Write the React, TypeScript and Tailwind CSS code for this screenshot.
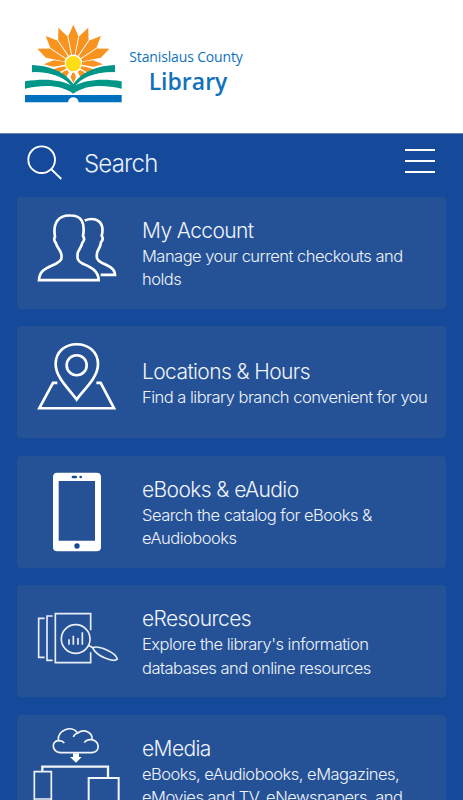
import type { ReactNode } from "react";

const upperPetals = [-67.5, -45, -22.5, 0, 22.5, 45, 67.5];

function Logo() {
  return (
    <svg viewBox="0 0 390 300" className="h-[100px] w-[130px] shrink-0" aria-hidden>
      <g fill="#f7931e">
        {upperPetals.map((angle) => (
          <path
            key={angle}
            d="M186 119 L175 63 L190 29 L205 63 L194 119 Z"
            transform={`rotate(${angle} 190 146)`}
          />
        ))}
        <path d="M166 141 V149 L129 155 L101 148 L131 136 Z M214 141 V149 L251 155 L279 148 L249 136 Z" />
        <path d="M167 153 L171 160 L149 172 L126 164 L143 158 Z M213 153 L209 160 L231 172 L254 164 L237 158 Z" />
        <path d="M170 165 L177 171 L169 187 L152 178 L158 171 Z M210 165 L203 171 L211 187 L228 178 L222 171 Z" />
        <path d="M187 173 H193 L198 187 L190 204 L182 187 Z" />
      </g>
      <circle cx="190" cy="146" r="26" fill="#fff" />
      <circle cx="190" cy="146" r="23" fill="#ffde17" />
      <g fill="#009688">
        <path d="M45 199 C105 190 153 194 190 214 C227 194 275 190 335 199 V221 C280 208 226 209 190 236 C154 209 100 208 45 221 Z" />
        <path d="M66 150 C112 151 163 168 190 207 C217 168 268 151 315 150 V172 C267 170 222 183 190 217 C158 183 113 170 66 172 Z" />
      </g>
      <path
        d="M66 172 C113 170 154 182 178 206 C158 194 125 189 100 191 M315 172 C267 170 226 182 202 206 C222 194 255 189 280 191"
        fill="#fff"
      />
      <path d="M45 240 H335 V262 H206 C204 242 176 242 174 262 H45 Z" fill="#0071bc" />
    </svg>
  );
}

function Icon({ viewBox, children }: { viewBox: string; children: ReactNode }) {
  return (
    <svg
      viewBox={viewBox}
      className="h-28 w-[125px] shrink-0"
      fill="none"
      stroke="#fff"
      strokeWidth="8"
      aria-hidden
    >
      {children}
    </svg>
  );
}

function AccountIcon() {
  return (
    <Icon viewBox="-9 -10.5 375 336">
      <path d="M57 239 H236 C235 208 211 200 187 189 C170 181 172 170 173 158 C176 147 184 141 187 127 C194 119 194 113 189 107 C196 65 184 45 152 45 C115 43 98 67 105 109 C101 115 103 122 108 128 C111 143 122 148 124 161 C126 176 124 181 109 189 C82 202 58 208 57 239 Z" />
      <path d="M194 60 C226 48 256 62 245 106 C250 113 248 120 243 125 C242 142 232 148 231 158 C229 171 230 179 244 186 C266 197 284 202 285 223 H242" />
    </Icon>
  );
}

function LocationIcon() {
  return (
    <Icon viewBox="-9 -11.7 375 336">
      <path d="M170 209 C153 183 107 145 107 103 C107 66 135 43 170 43 C205 43 234 66 234 103 C234 145 187 183 170 209 Z" />
      <circle cx="170" cy="106" r="30" />
      <path d="M112 159 H99 L58 235 H282 L242 159 H229" />
    </Icon>
  );
}

function PhoneIcon() {
  return (
    <Icon viewBox="-9 -12.9 375 336">
      <path
        d="M112 37 H230 Q243 37 243 50 V260 Q243 273 230 273 H112 Q99 273 99 260 V50 Q99 37 112 37 Z M116 62 V241 H225 V62 Z"
        fill="#fff"
        fillRule="evenodd"
        stroke="none"
      />
      <rect x="155" y="46" width="16" height="8" rx="3" fill="#154a9b" stroke="none" />
      <circle cx="182" cy="50" r="4" fill="#154a9b" stroke="none" />
      <circle cx="171" cy="257" r="8" fill="#154a9b" stroke="none" />
    </Icon>
  );
}

function ResourcesIcon() {
  return (
    <Icon viewBox="-9 -14 375 336">
      <g stroke="#e9eef6" strokeWidth="5">
        <path d="M74 86 H56 V203 H74 M98 79 H81 V212 H98" />
        <path d="M212 122 V72 H106 V219 H212 V188" />
        <circle cx="167" cy="148" r="43" />
        <path d="M147 149 V165 M160 138 V165 M174 145 V165 M187 128 V165" />
        <path d="M205 167 L219 174" />
        <path d="M218 174 C234 166 286 187 292 208 C282 220 228 200 218 174 Z" />
      </g>
    </Icon>
  );
}

function MediaIcon() {
  return (
    <Icon viewBox="21 45 375 336">
      <g stroke="#f1f4f9" strokeWidth="5">
        <path d="M151 158 C124 155 124 123 145 122 C141 90 185 74 203 99 C224 84 249 99 246 119 C271 126 270 156 246 158 Z" />
        <path d="M145 122 Q157 121 163 129 M203 99 Q193 102 190 111 M246 119 Q229 117 223 128" />
        <path d="M189 160 H207 V171 H215 L198 188 L180 171 H189 Z" fill="#fff" stroke="none" />
        <path d="M97 215 V200 H294 V232" strokeWidth="7" />
        <path d="M73 215 H124 V325 H73 Z M73 297 H124" />
        <path d="M236 234 H326 V345 H236 Z" strokeWidth="6" />
      </g>
    </Icon>
  );
}

const menu = [
  {
    title: "My Account",
    lines: ["Manage your current checkouts and", "holds"],
    icon: <AccountIcon />,
  },
  {
    title: "Locations & Hours",
    lines: ["Find a library branch convenient for you"],
    icon: <LocationIcon />,
  },
  {
    title: "eBooks & eAudio",
    lines: ["Search the catalog for eBooks &", "eAudiobooks"],
    icon: <PhoneIcon />,
  },
  {
    title: "eResources",
    lines: ["Explore the library's information", "databases and online resources"],
    icon: <ResourcesIcon />,
  },
  {
    title: "eMedia",
    lines: ["eBooks, eAudiobooks, eMagazines,", "eMovies and TV, eNewspapers, and", "more"],
    icon: <MediaIcon />,
  },
];

function MenuCard({ item }: { item: (typeof menu)[number] }) {
  return (
    <a className="flex min-h-28 shrink-0 rounded bg-[#255297]">
      {item.icon}
      <div className="flex flex-col justify-center whitespace-nowrap pb-[17px] pt-[19.5px] text-[#f0f4fa]">
        <h2 className="text-[21px] leading-7 tracking-[-0.6px]">{item.title}</h2>
        <p className="text-[16.5px] leading-[23.4px] tracking-[-0.51px]">
          {item.lines.map((line) => (
            <span key={line} className="block">
              {line}
            </span>
          ))}
        </p>
      </div>
    </a>
  );
}

export default function App() {
  return (
    <div className="flex h-[800px] w-[463px] flex-col overflow-hidden bg-[#154a9b] font-['Inter','Liberation_Sans',sans-serif] font-light">
      <header className="flex h-[134px] shrink-0 items-start border-b border-[#6c83ad] bg-white pl-2.5 pt-[15px]">
        <Logo />
        <div className="-ml-3 mt-[31px] flex w-[116px] flex-col items-center whitespace-nowrap font-['Open_Sans',sans-serif] text-[#0f72ba]">
          <span className="text-[14px] font-normal leading-[22px] tracking-[-0.15px]">Stanislaus County</span>
          <span className="ml-1 text-[23px] font-semibold leading-[26px]">Library</span>
        </div>
      </header>

      <div className="flex h-[62.7px] shrink-0 items-center justify-between pl-[27px] pr-7">
        <div className="flex items-center">
          <svg viewBox="81 57 108 105" className="mt-[-6px] h-[35px] w-9" fill="none" stroke="#fff" strokeWidth="5.5">
            <circle cx="125" cy="101" r="40" />
            <path d="M153 129 L184 159" />
          </svg>
          <span className="ml-[21px] mt-[-3px] text-2xl tracking-[-0.8px] text-[#e9eff8]">Search</span>
        </div>
        <button aria-label="Menu" className="mt-[-8px] flex flex-col gap-[9px]">
          <span className="h-[2px] w-[30px] bg-white" />
          <span className="h-[2px] w-[30px] bg-white" />
          <span className="h-[2px] w-[30px] bg-white" />
        </button>
      </div>

      <nav className="flex flex-col gap-[17.6px] pl-[17px] pr-[17px]">
        {menu.map((item) => (
          <MenuCard key={item.title} item={item} />
        ))}
      </nav>
    </div>
  );
}
